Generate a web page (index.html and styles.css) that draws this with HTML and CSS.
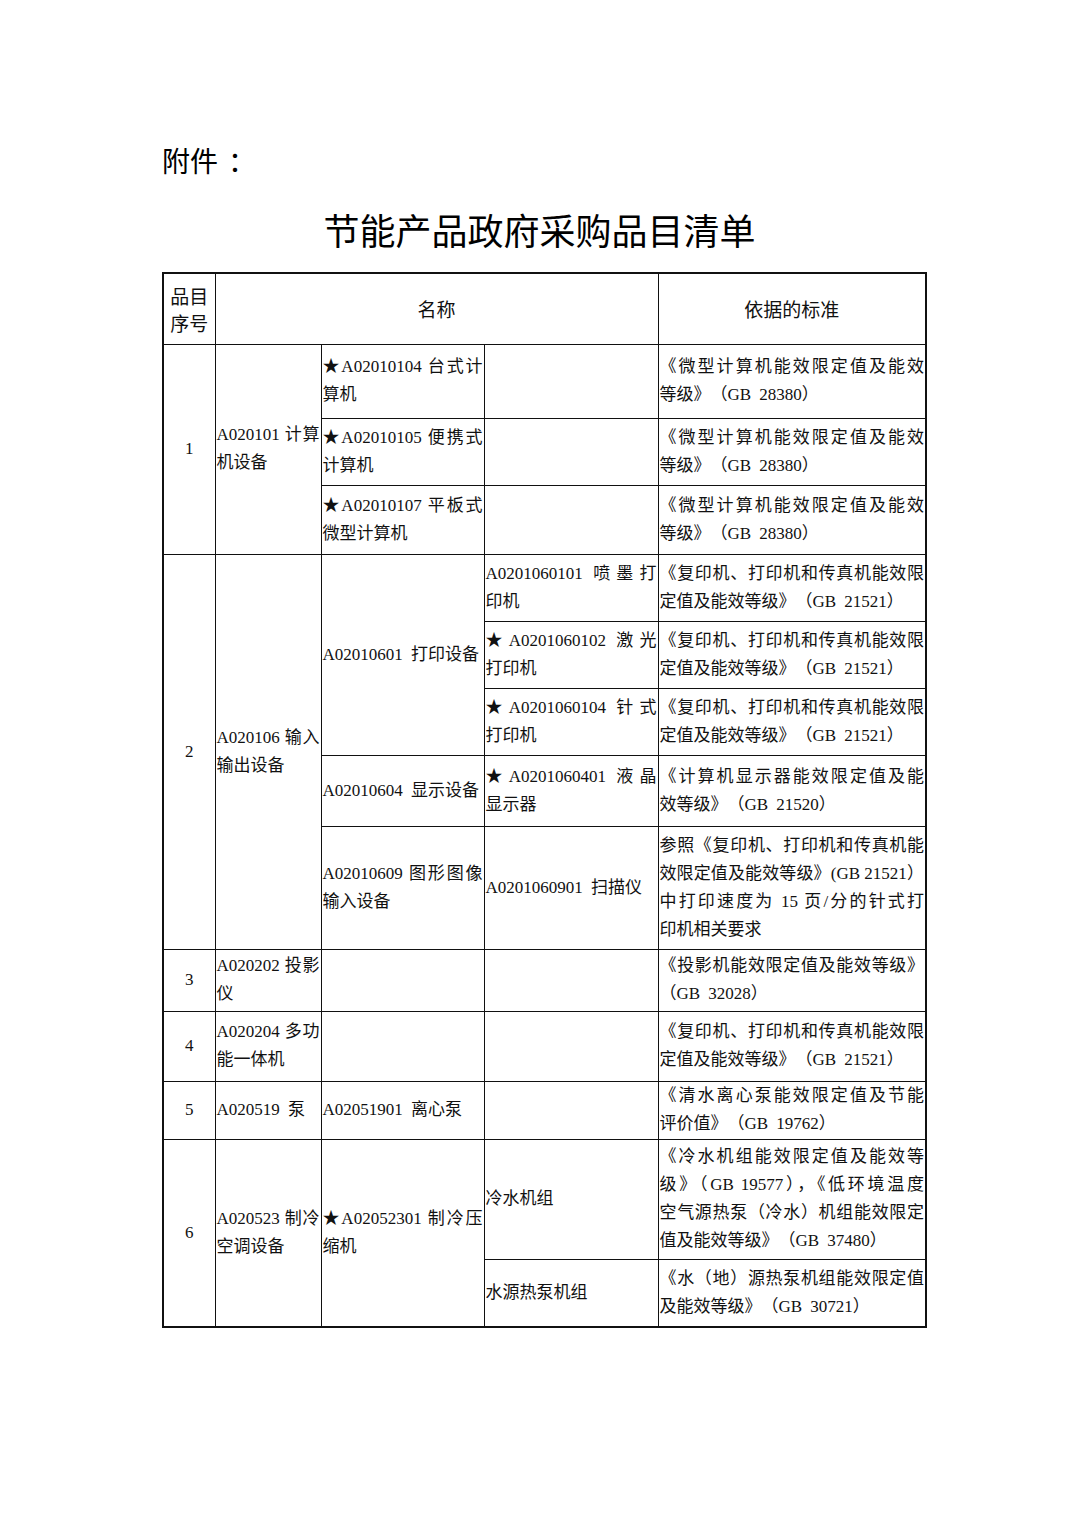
FILE: index.html
```html
<!DOCTYPE html>
<html lang="zh-CN">
<head>
<meta charset="utf-8">
<title>节能产品政府采购品目清单</title>
<link rel="stylesheet" href="styles.css">
</head>
<body>
<main class="page">
  <p class="attach">附件<span class="colon">：</span></p>
  <h1 class="title">节能产品政府采购品目清单</h1>
  <table class="list">
    <colgroup>
      <col class="c1"><col class="c2"><col class="c3"><col class="c4"><col class="c5">
    </colgroup>
    <thead>
      <tr class="h-head">
        <th class="no"><span class="hl">品目</span><span class="hl">序号</span></th>
        <th colspan="3">名称</th>
        <th>依据的标准</th>
      </tr>
    </thead>
    <tbody>
      <tr class="h74">
        <td rowspan="3" class="no">1</td>
        <td rowspan="3"><span class="f">A020101 计算</span>机设备</td>
        <td><span class="f">★A02010104 台式计</span>算机</td>
        <td></td>
        <td><span class="f">《微型计算机能效限定值及能效</span>等级》（GB 28380）</td>
      </tr>
      <tr class="h67">
        <td><span class="f">★A02010105 便携式</span>计算机</td>
        <td></td>
        <td><span class="f">《微型计算机能效限定值及能效</span>等级》（GB 28380）</td>
      </tr>
      <tr class="h69">
        <td><span class="f">★A02010107 平板式</span>微型计算机</td>
        <td></td>
        <td><span class="f">《微型计算机能效限定值及能效</span>等级》（GB 28380）</td>
      </tr>

      <tr class="h67">
        <td rowspan="5" class="no">2</td>
        <td rowspan="5"><span class="f">A020106 输入</span>输出设备</td>
        <td rowspan="3">A02010601 打印设备</td>
        <td><span class="f">A0201060101 喷墨打</span>印机</td>
        <td><span class="f">《复印机、打印机和传真机能效限</span>定值及能效等级》（GB 21521）</td>
      </tr>
      <tr class="h67">
        <td><span class="f">★A0201060102 激光</span>打印机</td>
        <td><span class="f">《复印机、打印机和传真机能效限</span>定值及能效等级》（GB 21521）</td>
      </tr>
      <tr class="h67">
        <td><span class="f">★A0201060104 针式</span>打印机</td>
        <td><span class="f">《复印机、打印机和传真机能效限</span>定值及能效等级》（GB 21521）</td>
      </tr>
      <tr class="h71">
        <td>A02010604 显示设备</td>
        <td><span class="f">★A0201060401 液晶</span>显示器</td>
        <td><span class="f">《计算机显示器能效限定值及能</span>效等级》（GB 21520）</td>
      </tr>
      <tr class="h123">
        <td><span class="f">A02010609 图形图像</span>输入设备</td>
        <td>A0201060901 扫描仪</td>
        <td><span class="f">参照《复印机、打印机和传真机能</span><span class="f tight">效限定值及能效等级》(GB 21521）</span><span class="f">中打印速度为 15 页/分的针式打</span>印机相关要求</td>
      </tr>

      <tr class="h62">
        <td class="no">3</td>
        <td><span class="f">A020202 投影</span>仪</td>
        <td></td>
        <td></td>
        <td><span class="f">《投影机能效限定值及能效等级》</span>（GB 32028）</td>
      </tr>
      <tr class="h70">
        <td class="no">4</td>
        <td><span class="f">A020204 多功</span>能一体机</td>
        <td></td>
        <td></td>
        <td><span class="f">《复印机、打印机和传真机能效限</span>定值及能效等级》（GB 21521）</td>
      </tr>
      <tr class="h58">
        <td class="no">5</td>
        <td>A020519 泵</td>
        <td>A02051901 离心泵</td>
        <td></td>
        <td><span class="f">《清水离心泵能效限定值及节能</span>评价值》（GB 19762）</td>
      </tr>
      <tr class="h120">
        <td rowspan="2" class="no">6</td>
        <td rowspan="2"><span class="f">A020523 制冷</span>空调设备</td>
        <td rowspan="2"><span class="f">★A02052301 制冷压</span>缩机</td>
        <td>冷水机组</td>
        <td><span class="f">《冷水机组能效限定值及能效等</span><span class="f tight">级》（GB 19577），《低环境温度</span><span class="f">空气源热泵（冷水）机组能效限定</span>值及能效等级》（GB 37480）</td>
      </tr>
      <tr class="h68">
        <td>水源热泵机组</td>
        <td><span class="f">《水（地）源热泵机组能效限定值</span>及能效等级》（GB 30721）</td>
      </tr>
    </tbody>
  </table>
</main>
</body>
</html>
```

FILE: styles.css
```css
html, body {
  margin: 0;
  padding: 0;
  background: #fff;
}

body {
  color: #111;
  font-family: "Liberation Serif", "Noto Sans CJK SC", serif;
}

.page {
  width: 763px;
  padding: 140px 0 0 162px;
}

.attach {
  margin: 0;
  font-family: "Noto Sans CJK SC", sans-serif;
  font-size: 28px;
  line-height: 40px;
  font-weight: 400;
  color: #000;
}

.colon {
  margin-left: 10px;
}

.title {
  margin: 24px 8px 0 0;
  text-align: center;
  font-family: "Noto Sans CJK SC", sans-serif;
  font-size: 36px;
  line-height: 50px;
  font-weight: 400;
  color: #000;
}

.list {
  margin-top: 18px;
  width: 763px;
  border-collapse: collapse;
  table-layout: fixed;
  border: 2px solid #111;
}

.c1 { width: 52px; }
.c2 { width: 106px; }
.c3 { width: 163px; }
.c4 { width: 174px; }
.c5 { width: 268px; }

.list th,
.list td {
  border: 1.5px solid #111;
  padding: 0 1px;
  vertical-align: middle;
  text-align: left;
  font-size: 17px;
  line-height: 28px;
  word-break: break-all;
  word-spacing: 4px;
  text-spacing-trim: space-all;
}

.list th {
  font-family: "Noto Sans CJK SC", sans-serif;
  font-size: 19px;
  font-weight: 400;
  line-height: 27px;
  text-align: center;
  word-spacing: 0;
}

.list .no {
  text-align: center;
}

.hl {
  display: block;
}

.f {
  display: block;
  text-align: justify;
  text-align-last: justify;
  white-space: nowrap;
  word-spacing: 0;
}

.f.tight {
  text-spacing-trim: normal;
}

.h-head { height: 71px; }
.h74 { height: 74px; }
.h67 { height: 67px; }
.h69 { height: 69px; }
.h71 { height: 71px; }
.h123 { height: 123px; }
.h62 { height: 62px; }
.h70 { height: 70px; }
.h58 { height: 58px; }
.h120 { height: 120px; }
.h68 { height: 68px; }
```
